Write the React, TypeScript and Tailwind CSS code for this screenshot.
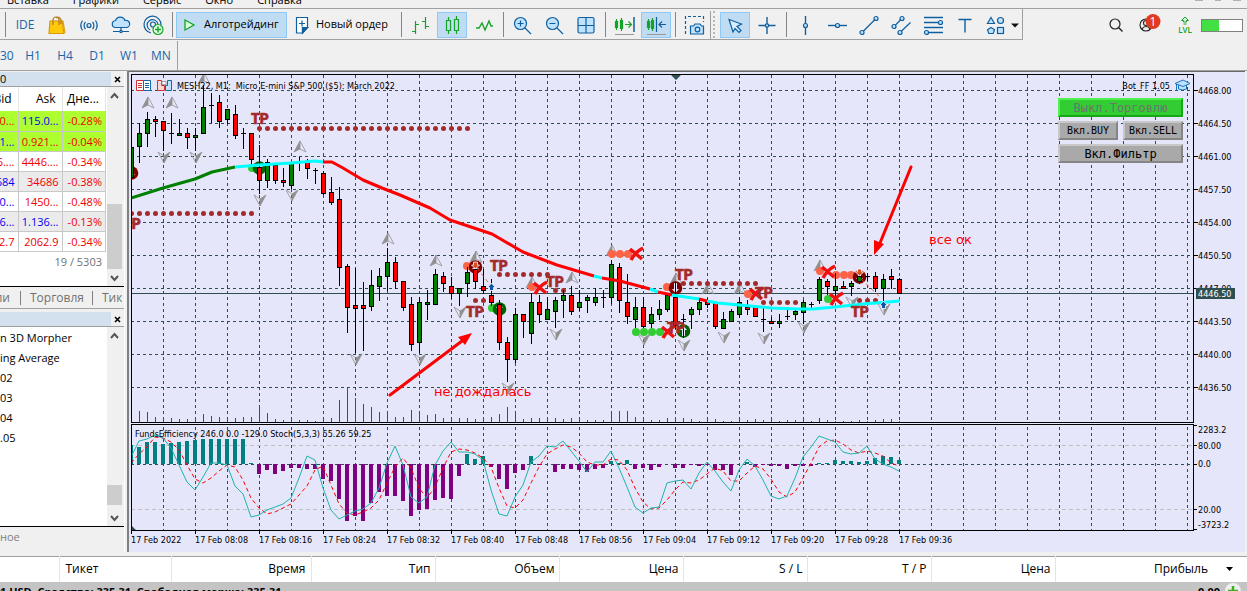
import React from "react";

const BLUE = "#0f5f9f";
const SKY = "#bfe3ff";
const GREEN = "#14a32a";

const FONT = "font-['Open_Sans','Noto_Sans',sans-serif]";

/* ---------- toolbar ---------- */

const Icon = ({ children }: { children: React.ReactNode }) => (
  <svg width="24" height="24" viewBox="0 0 24 24" fill="none" stroke={BLUE} strokeWidth="1.2">
    {children}
  </svg>
);

type ToolProps = { label: string; active?: boolean; children: React.ReactNode };

const Tool = ({ label, active, children }: ToolProps) => (
  <div className="flex h-[26px] w-8 justify-center">
    <button
      type="button"
      aria-label={label}
      className={
        active
          ? "flex w-[30px] items-center justify-center border border-[#90c8f6] bg-[#c0dcf3]"
          : "flex w-[30px] items-center justify-center"
      }
    >
      {children}
    </button>
  </div>
);

const Sep = () => (
  <div className="flex h-[25px] w-1.5 justify-center">
    <div className="w-px bg-[#858585]" />
  </div>
);

const Toolbar = () => (
  <div className="flex h-[31px] items-center justify-between border-t border-[#a0a0a0]">
    <div className="flex h-[31px] items-center border-r border-b border-[#a0a0a0] pt-0.5 pl-0.5">
      <Sep />
      <button type="button" className="ml-px h-[26px] w-8 text-xs text-[#1a66a5]">IDE</button>
      <Tool label="Маркет">
        <Icon>
          <path d="M5 8h12l2 12.500H4z" fill="#ffc90e" stroke="#d8980b" />
          <path d="M8 12V7a3 3 0 0 1 6 0v5M11 5a3 3 0 0 1 5 2v4" stroke="#b5781c" />
          <path d="M17 8h1l2 12" stroke="#e0a010" />
        </Icon>
      </Tool>
      <Tool label="Сигналы">
        <Icon>
          <circle cx="12" cy="12.500" r="2" fill={SKY} />
          <path d="M8.500 9a5 5 0 0 0 0 7M15.500 9a5 5 0 0 1 0 7M5.500 7.500a9 9 0 0 0 0 10M18.500 7.500a9 9 0 0 1 0 10" />
        </Icon>
      </Tool>
      <Tool label="VPS">
        <Icon>
          <path d="M7 14.500a3.500 3.500 0 0 1-.5-7A5 5 0 0 1 16 7.500a3.500 3.500 0 0 1 2 7z" fill={SKY} />
          <path d="M4 18.500h16M12 14.500v4" />
          <circle cx="12" cy="18.500" r="1.200" fill={SKY} />
        </Icon>
      </Tool>
      <Tool label="Сообщество">
        <Icon>
          <path d="M10 20a8.500 8.500 0 1 1 10-8M9 17a5.500 5.500 0 1 1 8-6" />
          <circle cx="12" cy="11.500" r="2.500" />
          <circle cx="17" cy="16.500" r="5" fill="#e4ffe4" stroke={GREEN} />
          <path d="M14 16.500h6M17 13.500v6" stroke={GREEN} strokeWidth="1.5" />
        </Icon>
      </Tool>
      <Sep />
      <button
        type="button"
        className="ml-px flex h-[26px] w-[111px] items-center gap-1.5 border border-[#90c8f6] bg-[#c0dcf3] pl-0.5 text-[11px] whitespace-nowrap"
      >
        <svg width="19" height="24" viewBox="0 0 19 24" fill="#d9ffd9" stroke={GREEN} strokeWidth="1.3">
          <path d="M6 7l9 5-9 5z" />
        </svg>
        Алготрейдинг
      </button>
      <button type="button" className="flex h-[26px] w-[111px] items-center gap-0.5 pl-[3px] text-[11px] whitespace-nowrap">
        <Icon>
          <path d="M6.500 4.500h11v10l-5 5.500h-6zM17.500 14.500l-5 5.500v-5.500z" fill="#fff" />
          <path d="M12.500 20l5-5.500h-5z" fill={BLUE} />
          <path d="M9 10.500h6M12 7.500v6" />
        </Icon>
        Новый ордер
      </button>
      <Sep />
      <Tool label="Бары">
        <Icon>
          <path d="M7.500 8v13M4 18.500h3.500M7.500 11.500H11M17.500 4v12M14 8.500h3.500M17.500 13.500H21" stroke={GREEN} />
        </Icon>
      </Tool>
      <Tool label="Свечи" active>
        <Icon>
          <path d="M8.500 4v3M8.500 18v3M16.500 3v3M16.500 18v3M6.500 7.500h4v10h-4zM14.500 6.500h4v11h-4z" stroke={GREEN} />
        </Icon>
      </Tool>
      <Tool label="Линия">
        <Icon>
          <path d="M4 15h3l3-5 3 7 4-9 2 5h2" stroke={GREEN} strokeWidth="1.4" />
        </Icon>
      </Tool>
      <Sep />
      <Tool label="Увеличить">
        <Icon>
          <circle cx="10.500" cy="10.500" r="6" fill={SKY} />
          <path d="M15 15l6 6M7.500 10.500h6M10.500 7.500v6" />
        </Icon>
      </Tool>
      <Tool label="Уменьшить">
        <Icon>
          <circle cx="10.500" cy="10.500" r="6" fill={SKY} />
          <path d="M15 15l6 6M7.500 10.500h6" />
        </Icon>
      </Tool>
      <Tool label="Упорядочить окна">
        <Icon>
          <rect x="4" y="4.500" width="16" height="15.500" rx="1.500" fill={SKY} />
          <path d="M12 4v16M4 12.500h16" />
        </Icon>
      </Tool>
      <Sep />
      <Tool label="Автопрокрутка">
        <Icon>
          <path d="M4.500 6v11M9.500 5v13M3.500 8.500h2v6h-2zM8.500 7.500h2v8h-2zM13 11.500h6M16.500 8.500l3 3-3 3" stroke={GREEN} />
          <path d="M22 4v15" strokeWidth="1.500" />
          <path d="M3 21.500h19" stroke="#999" strokeWidth="1" />
        </Icon>
      </Tool>
      <Tool label="Сдвиг графика" active>
        <Icon>
          <path d="M4.500 6v11M8.500 5v13M3.500 8.500h2v6h-2zM7.500 7.500h2v8h-2z" stroke={GREEN} />
          <path d="M12.500 4v15M15 11.500h7M18 8.500l-3 3 3 3" />
          <path d="M3 21.500h19" stroke="#999" strokeWidth="1" />
        </Icon>
      </Tool>
      <Sep />
      <Tool label="Снимок экрана">
        <Icon>
          <path d="M3.500 21V3.500h18V9" strokeDasharray="3 2" />
          <path d="M8.500 13h3l1.500-2h5l1.500 2h2v8h-13z" fill={SKY} />
          <circle cx="15.500" cy="16.500" r="2.300" />
        </Icon>
      </Tool>
      <div className="h-full w-px bg-[#a0a0a0]" />
      <div className="mx-0.5 h-[27px] w-1 border-l-2 border-dotted border-[#b8b8b8]" />
      <Tool label="Курсор" active>
        <Icon>
          <path d="M6 6.500l12.500 4.500-4.500 2.500 4 4-2 2-4-4-2 3.500z" fill="#d6ecff" />
        </Icon>
      </Tool>
      <Tool label="Перекрестие">
        <Icon>
          <path d="M12 4v17M3.500 12.500h17" strokeWidth="1.400" />
          <circle cx="12" cy="12.500" r="1.700" fill={SKY} />
        </Icon>
      </Tool>
      <Sep />
      <Tool label="Вертикальная линия">
        <Icon>
          <path d="M12.500 3v19" strokeWidth="1.400" />
          <circle cx="12.500" cy="12.500" r="2" fill={SKY} />
        </Icon>
      </Tool>
      <Tool label="Горизонтальная линия">
        <Icon>
          <path d="M3 12.500h19" strokeWidth="1.400" />
          <circle cx="12.500" cy="12.500" r="2" fill={SKY} />
        </Icon>
      </Tool>
      <Tool label="Трендовая линия">
        <Icon>
          <path d="M5 19.500l14-14" />
          <circle cx="5" cy="19.500" r="2" fill={SKY} />
          <circle cx="19" cy="5.500" r="2" fill={SKY} />
        </Icon>
      </Tool>
      <Tool label="Канал">
        <Icon>
          <path d="M5 13.500l8-8M11 19.500l10.500-10" />
          <circle cx="5" cy="13.500" r="2" fill={SKY} />
          <circle cx="13" cy="5.500" r="2" fill={SKY} />
          <circle cx="11" cy="19.500" r="2" fill={SKY} />
        </Icon>
      </Tool>
      <Tool label="Фибоначчи">
        <Icon>
          <path d="M3 4.500h19M3 9.500h17M3 14.500h19M5 19.500h17" strokeWidth="1.400" />
          <circle cx="19.500" cy="9.500" r="2" fill={SKY} />
          <circle cx="5.500" cy="19.500" r="2" fill={SKY} />
        </Icon>
      </Tool>
      <Tool label="Текст">
        <Icon>
          <path d="M5.500 6.500h13M12 6.500v13" strokeWidth="1.400" />
        </Icon>
      </Tool>
      <button type="button" aria-label="Объекты" className="flex h-[26px] w-[41px] items-center">
        <svg width="40" height="24" viewBox="0 0 40 24" fill={SKY} stroke={BLUE} strokeWidth="1.2">
          <path d="M10 4.500l3.500 6h-7zM10 14.500l3.500 2.300-1.300 3.700H7.800l-1.300-3.700z" />
          <circle cx="19.500" cy="7.500" r="3" />
          <rect x="16.500" y="14.500" width="6" height="6" />
          <path d="M30 10.500h8l-4 4z" fill="#111" stroke="none" />
        </svg>
      </button>
    </div>
    <div className="flex items-center pt-0.5 pr-1">
      <button type="button" aria-label="Поиск" className="w-6">
        <svg width="24" height="24" viewBox="0 0 24 24" fill="none" stroke="#222" strokeWidth="1.2">
          <circle cx="11" cy="11" r="5" />
          <path d="M14.500 14.500l4 4" strokeWidth="1.500" />
        </svg>
      </button>
      <button type="button" aria-label="Уведомления" className="ml-2 w-8">
        <svg width="32" height="26" viewBox="0 0 32 26" fill="none" stroke="#222" strokeWidth="1.1">
          <circle cx="10" cy="13" r="6" />
          <circle cx="10" cy="11" r="2.500" />
          <path d="M6 17a4.500 4.500 0 0 1 8 0" />
          <circle cx="17" cy="9.500" r="7.500" fill="#e03a20" stroke="none" />
          <text x="17" y="14" textAnchor="middle" fontSize="12" fill="#fff" stroke="none">1</text>
        </svg>
      </button>
      <button type="button" className="ml-[3px] flex w-7 flex-col items-center text-[8px] leading-[8px] font-semibold text-[#14a32a]">
        <svg width="10" height="10" viewBox="0 0 10 10" fill="#d9ffd9" stroke={GREEN}>
          <path d="M5 1l3.500 3.500h-2v1.500h-3V4.500h-2zM3.500 8h3" />
        </svg>
        LVL
      </button>
      <div className="ml-0.5 flex h-[13px] w-[42px] border border-[#808080] bg-white">
        <div className="w-[17px] bg-[#42e042]" />
      </div>
    </div>
  </div>
);

const Menu = () => (
  <div className="flex h-2 items-end justify-between overflow-hidden text-[11px] leading-4">
    <div className="flex gap-6 pl-[7px]">
      <button type="button">Вставка</button>
      <button type="button">Графики</button>
      <button type="button">Сервис</button>
      <button type="button">Окно</button>
      <button type="button">Справка</button>
    </div>
    <div className="flex gap-3 self-start pr-1.5">
      <div className="h-px w-2 bg-[#b0b0b0]" />
      <div className="h-px w-1.5 bg-[#b0b0b0]" />
      <div className="h-px w-2 bg-[#b0b0b0]" />
    </div>
  </div>
);

const periods = ["H1", "H4", "D1", "W1", "MN"];

const Periods = () => (
  <div className="flex h-8 border-b border-[#a0a0a0] pt-0.5">
    <div className="flex items-center border-r border-[#a0a0a0] pt-px text-xs text-[#1a66a5]">
      <button type="button" className="w-[17px] text-left">30</button>
      {periods.map((p) => (
        <button key={p} type="button" className="w-8">{p}</button>
      ))}
    </div>
  </div>
);

/* ---------- left panels ---------- */

type Quote = { bid: string; ask: string; day: string; bidColor: string; askColor: string; row: string };

const R = "text-[#f00000]";
const B = "text-[#0000f0]";

const quotes: Quote[] = [
  { bid: "115.0...", ask: "115.0...", day: "-0.28%", bidColor: R, askColor: B, row: "bg-[#adff2f]" },
  { bid: "0.921...", ask: "0.921...", day: "-0.04%", bidColor: B, askColor: R, row: "bg-[#adff2f]" },
  { bid: "4446....", ask: "4446....", day: "-0.34%", bidColor: R, askColor: R, row: "bg-white" },
  { bid: "34684", ask: "34686", day: "-0.38%", bidColor: B, askColor: R, row: "bg-[#ebebeb]" },
  { bid: "1450...", ask: "1450...", day: "-0.48%", bidColor: B, askColor: R, row: "bg-white" },
  { bid: "1.136...", ask: "1.136...", day: "-0.13%", bidColor: B, askColor: B, row: "bg-[#ebebeb]" },
  { bid: "2062.7", ask: "2062.9", day: "-0.34%", bidColor: R, askColor: R, row: "bg-white" },
];

const PanelTitle = ({ text }: { text: string }) => (
  <div className="flex h-[15px] shrink-0 items-center border-b border-[#a0a0a0] text-[11px]">
    <div className="h-full flex-1 overflow-hidden bg-[#d3e1ef] leading-[14px]">{text}</div>
    <button type="button" aria-label="Закрыть" className="flex w-[13px] justify-center">
      <svg width="7" height="7" viewBox="0 0 7 7" stroke="#000" strokeWidth="1.6">
        <path d="M1 1l5 5M6 1L1 6" />
      </svg>
    </button>
  </div>
);

const Chevron = ({ up }: { up?: boolean }) => (
  <svg width="15" height="17" viewBox="0 0 15 17" fill="none" stroke="#555" strokeWidth="2">
    <path d={up ? "M4 11l3.500-4 3.500 4" : "M4 7l3.500 4 3.500-4"} />
  </svg>
);

const MarketWatch = () => (
  <section className="flex h-[238px] shrink-0 flex-col border-b border-[#a0a0a0] pt-px">
    <PanelTitle text="0" />
    <div className="flex flex-1 border-b border-black bg-white">
      <div className="w-[107px] pr-px">
        <table className="w-full table-fixed border-collapse text-[11px]">
          <thead>
            <tr className="h-[24px] text-xs">
              <th className="w-[18px] border-r border-[#e5e5e5] p-0 font-normal">
                <div className="flex justify-end overflow-hidden pr-1.5">Bid</div>
              </th>
              <th className="w-[44px] border-r border-[#e5e5e5] p-0 pr-1.5 text-right font-normal">Ask</th>
              <th className="border-r border-[#e5e5e5] p-0 pr-1.5 text-right font-normal">Дне...</th>
            </tr>
          </thead>
          <tbody>
            {quotes.map((q, i) => (
              <tr key={i} className={q.row + " h-5 border-b border-[#c8c8c8] leading-[19px]"}>
                <td className="border-r border-[#c8c8c8] p-0">
                  <div className={q.bidColor + " flex justify-end overflow-hidden pr-[3px]"}>{q.bid}</div>
                </td>
                <td className="border-r border-[#c8c8c8] p-0">
                  <div className={q.askColor + " flex justify-end overflow-hidden pr-[3px]"}>{q.ask}</div>
                </td>
                <td className="border-r border-[#c8c8c8] p-0">
                  <div className={R + " flex justify-end pr-[3px]"}>{q.day}</div>
                </td>
              </tr>
            ))}
          </tbody>
        </table>
        <div className="pr-1 text-right text-[11px] leading-[19px] text-[#707070]">19 / 5303</div>
      </div>
      <div className="flex flex-1 flex-col bg-[#f0f0f0]">
        <Chevron up />
        <div className="flex-1" />
        <div className="h-[65px] w-[15px] bg-[#cdcdcd]" />
        <Chevron />
      </div>
    </div>
    <div className="flex h-[21px] items-center overflow-hidden text-xs whitespace-nowrap text-[#707070]">
      <button type="button" className="flex w-[10px] justify-end">Детали</button>
      <div className="ml-[10px] h-3.5 w-px bg-[#808080]" />
      <button type="button" className="ml-[9px]">Торговля</button>
      <div className="ml-[8px] h-3.5 w-px bg-[#808080]" />
      <button type="button" className="ml-[9px] w-5 overflow-hidden text-left">Тик</button>
    </div>
  </section>
);

const items = ["n 3D Morpher", "ing Average", "02", "03", "04", ".05"];

const Navigator = () => (
  <section className="mt-[3px] flex min-h-0 flex-1 flex-col">
    <PanelTitle text="" />
    <div className="flex flex-1 border-b border-black bg-white">
      <ul className="w-[107px] pt-px text-[11px] leading-5 whitespace-nowrap">
        {items.map((t) => (
          <li key={t}>{t}</li>
        ))}
      </ul>
      <div className="flex flex-1 flex-col bg-[#f0f0f0]">
        <Chevron up />
        <div className="flex-1" />
        <div className="mb-1 h-[20px] w-[15px] bg-[#cdcdcd]" />
        <Chevron />
      </div>
    </div>
    <div className="h-[25px] text-[11px] leading-5 text-[#808080]">ное</div>
  </section>
);

/* ---------- chart ---------- */

// high, low, body top, body bottom; kind: g = up, r = down, d = doji
type Candle = [number, number, number, number, "g" | "r" | "d"];

const candles: Candle[] = [
  [147, 177, 147, 177, "g"], [123, 162, 133, 146, "g"], [112, 146, 119, 133, "g"], [116, 136, 119, 121, "r"],
  [121, 150, 121, 130, "r"], [113, 143, 133, 133, "d"], [119, 135, 133, 135, "g"], [128, 148, 133, 137, "r"],
  [128, 150, 135, 137, "g"], [85, 133, 107, 133, "g"], [93, 122, 105, 105, "d"], [95, 127, 102, 121, "r"],
  [109, 123, 109, 119, "g"], [105, 138, 114, 135, "r"], [128, 148, 133, 133, "d"], [133, 164, 133, 159, "r"],
  [145, 193, 167, 180, "r"], [159, 187, 162, 180, "g"], [165, 183, 165, 180, "r"], [168, 186, 180, 182, "r"],
  [163, 188, 163, 185, "g"], [157, 170, 162, 162, "d"], [159, 178, 162, 168, "r"], [168, 183, 170, 170, "d"],
  [171, 194, 173, 193, "r"], [177, 204, 192, 202, "r"], [187, 285, 199, 267, "r"], [264, 332, 266, 307, "r"],
  [268, 352, 305, 308, "r"], [282, 350, 305, 308, "r"], [270, 310, 285, 306, "g"], [268, 300, 276, 286, "g"],
  [248, 290, 262, 276, "g"], [257, 288, 262, 281, "r"], [281, 310, 281, 307, "r"], [297, 350, 304, 344, "r"],
  [297, 352, 302, 342, "g"], [290, 319, 302, 304, "g"], [269, 304, 274, 304, "g"], [272, 291, 276, 283, "r"],
  [277, 298, 286, 293, "r"], [288, 305, 288, 293, "g"], [267, 296, 272, 283, "g"], [269, 288, 269, 281, "r"],
  [269, 293, 286, 290, "r"], [279, 305, 295, 302, "r"], [300, 349, 304, 342, "r"], [337, 381, 342, 359, "r"],
  [308, 362, 314, 359, "g"], [314, 337, 314, 321, "r"], [293, 343, 302, 333, "g"], [295, 322, 302, 314, "r"],
  [297, 319, 309, 319, "g"], [297, 327, 300, 311, "g"], [290, 317, 295, 300, "g"], [286, 314, 295, 311, "r"],
  [290, 310, 302, 307, "g"], [295, 312, 297, 300, "g"], [288, 305, 297, 302, "g"], [290, 307, 297, 297, "d"],
  [260, 303, 264, 297, "g"], [263, 312, 267, 300, "r"], [274, 323, 302, 316, "r"], [297, 327, 307, 319, "g"],
  [297, 327, 307, 326, "r"], [307, 327, 314, 323, "g"], [300, 319, 309, 314, "g"], [295, 311, 295, 309, "g"],
  [282, 328, 297, 325, "r"], [314, 337, 319, 319, "d"], [307, 328, 309, 314, "g"], [300, 314, 302, 309, "g"],
  [298, 307, 302, 304, "r"], [302, 328, 303, 326, "r"], [312, 328, 319, 328, "g"], [309, 321, 311, 321, "g"],
  [297, 317, 302, 314, "g"], [300, 314, 307, 309, "r"], [305, 316, 307, 316, "r"], [308, 331, 319, 319, "d"],
  [317, 323, 321, 323, "r"], [314, 327, 321, 323, "g"], [307, 319, 316, 316, "d"], [309, 319, 311, 314, "g"],
  [300, 323, 302, 312, "g"], [302, 307, 304, 304, "d"], [277, 303, 279, 300, "g"], [279, 294, 281, 286, "r"],
  [273, 297, 286, 290, "g"], [281, 288, 286, 288, "r"], [281, 295, 283, 286, "g"], [273, 283, 276, 281, "g"],
  [273, 280, 276, 276, "d"], [272, 291, 276, 288, "r"], [274, 302, 279, 288, "g"], [269, 288, 276, 279, "r"],
  [278, 293, 279, 293, "r"],
];

const volumes = [
  6, 11, 10, 5, 5, 4, 3, 3, 5, 8, 6, 5, 3, 4, 5, 5, 16, 9, 3, 2, 3, 2, 2, 1, 2, 4, 22, 34, 24, 18, 15, 10, 11, 5, 5,
  12, 8, 7, 8, 4, 3, 4, 4, 3, 5, 5, 8, 15, 10, 3, 4, 4, 5, 4, 3, 4, 3, 2, 2, 2, 8, 11, 11, 5, 4, 2, 2, 4, 5, 4, 3,
  1, 2, 3, 1, 1, 2, 2, 3, 2, 2, 1, 2, 2, 2, 1, 4, 2, 1, 1, 1, 2, 1, 2, 3, 3, 1,
];

const funds = [
  19, 17, 22, 22, 20, 21, 22, 23, 24, 25, 25, 25, 25, 25, 25, 1, -10, -6, -10, -7, -4, -4, -5, -5, -15, -17, -35,
  -57, -52, -57, -39, -28, -32, -32, -37, -52, -46, -45, -36, -34, -35, -12, 10, 5, 8, -3, -15, -25, -9, -6, 8, -1,
  0, -8, -5, -5, -6, -8, -5, -4, 3, 1, 4, -5, -4, -6, -3, 0, -4, -4, -1, -2, -1, -6, -6, -11, 0, 2, -3, -1, -2, -2,
  -5, -2, -2, -2, 1, 1, 4, 3, 3, 2, 3, 6, 8, 7, 4,
];

const stoch = [
  457, 441, 439, 435, 438, 448, 465, 482, 490, 477, 463, 463, 465, 486, 494, 517, 515, 510, 507, 504, 498, 478, 456,
  460, 488, 510, 519, 515, 511, 509, 503, 488, 463, 446, 465, 497, 503, 497, 465, 451, 442, 452, 452, 454, 460, 490,
  514, 516, 497, 485, 462, 456, 446, 447, 441, 451, 461, 472, 462, 462, 451, 468, 487, 507, 513, 508, 507, 483, 481,
  480, 489, 473, 462, 471, 482, 491, 470, 459, 466, 480, 496, 499, 496, 478, 457, 447, 436, 439, 442, 452, 454, 453,
  446, 459, 464, 467, 471,
];

const signal = [
  463, 454, 447, 437, 438, 442, 450, 465, 479, 483, 478, 471, 465, 467, 480, 498, 508, 514, 512, 508, 504, 495, 486,
  470, 466, 485, 504, 513, 515, 512, 508, 500, 483, 467, 458, 468, 488, 498, 487, 468, 452, 449, 450, 453, 458, 467,
  488, 506, 508, 500, 483, 467, 454, 449, 445, 447, 453, 462, 465, 465, 459, 460, 470, 488, 502, 509, 508, 500, 490,
  482, 483, 480, 474, 468, 471, 481, 481, 473, 466, 469, 479, 492, 497, 492, 478, 463, 447, 441, 440, 444, 450, 453,
  451, 453, 456, 463, 466,
];

const barX = (i: number) => 131 + i * 8;
const toPoints = (ys: number[]) => ys.map((y, i) => `${barX(i)},${y}`).join(" ");

const maParts = [
  { color: "#008000", d: "M131 198L163 188L195 179L212 172L235 167" },
  { color: "#ff0000", d: "M323 162L332 162L343 168L363 180L382 188L400 195L430 208L450 220L492 234L523 252L557 265L594 276" },
  { color: "#00ffff", d: "M235 167L259 165L291 163L315 161L323 162M594 276L602 278" },
  { color: "#ff0000", d: "M602 278L620 281L650 289M658 292L672 295" },
  { color: "#00ffff", d: "M650 289L658 292M672 295L699 299M707 301L718 303L750 306L772 308L797 309L813 309L835 307L863 304L900 301" },
  { color: "#ff0000", d: "M699 299L707 301" },
];

const dotRows = [
  { y: 128, from: 259, to: 467 },
  { y: 213, from: 131, to: 251 },
  { y: 274, from: 499, to: 547 },
  { y: 290, from: 555, to: 563 },
  { y: 300, from: 475, to: 483 },
  { y: 283, from: 683, to: 755 },
  { y: 302, from: 763, to: 795 },
  { y: 300, from: 859, to: 875 },
];

const dots = dotRows.flatMap(({ y, from, to }) =>
  Array.from({ length: (to - from) / 8 + 1 }, (_, i) => [from + i * 8, y])
);

const upMarks = [
  [148, 103], [172, 103], [204, 79], [300, 147], [388, 239], [436, 261], [476, 257], [532, 283], [572, 278],
  [612, 251], [676, 279], [708, 289], [740, 289], [820, 266],
];
const downMarks = [
  [164, 157], [196, 157], [260, 200], [292, 195], [356, 359], [420, 359], [460, 312], [508, 388], [556, 334],
  [644, 339], [684, 345], [724, 337], [764, 338], [804, 327], [852, 302], [884, 309],
];
const orange = [
  [467, 266], [612, 254], [620, 254], [628, 254], [532, 287], [667, 287], [748, 294], [820, 271], [836, 275],
  [844, 275], [851, 275],
];
const lime = [[252, 168], [492, 308], [636, 332], [644, 332], [652, 332], [660, 332], [828, 299]];
const crosses = [[636, 254], [540, 288], [668, 332], [756, 294], [828, 272], [836, 299]];
const sells = [[131, 173], [475, 267], [675, 288], [859, 277]];
const buys = [[259, 168], [499, 309], [683, 331]];
const tps = [[252, 124], [124, 229], [491, 271], [547, 287], [467, 317], [676, 280], [668, 333], [756, 298], [852, 317]];

const prices = ["4468.00", "4464.50", "4461.00", "4457.50", "4454.00", "4450.50", "4447.00", "4443.50", "4440.00", "4436.50"];
const times = [
  "17 Feb 2022", "17 Feb 08:08", "17 Feb 08:16", "17 Feb 08:24", "17 Feb 08:32", "17 Feb 08:40", "17 Feb 08:48",
  "17 Feb 08:56", "17 Feb 09:04", "17 Feb 09:12", "17 Feb 09:20", "17 Feb 09:28", "17 Feb 09:36",
];
const levels = [
  { y: 429, tick: 425, text: "2283.2" },
  { y: 445, tick: 445, text: "80.00" },
  { y: 463, tick: 464, text: "0.0" },
  { y: 509, tick: 509, text: "20.00" },
  { y: 524, tick: 529, text: "-3723.2" },
];
const gridX = Array.from({ length: 33 }, (_, i) => 163 + i * 32);

const Grid = () => (
  <g stroke="#2f4f4f" strokeDasharray="3 3" shapeRendering="crispEdges">
    {gridX.map((x) => (
      <path key={x} d={`M${x + 0.5} 75V422M${x + 0.5} 427V530`} />
    ))}
    {prices.map((p, i) => (
      <path key={p} d={`M131 ${90.5 + i * 33}H1193`} />
    ))}
    <path d="M131 464.500H1193" />
    <path d="M131 445.500H1193M131 509.500H1193" stroke="#c0c0c0" strokeDasharray="4 3" />
  </g>
);

const Candles = () => (
  <g shapeRendering="crispEdges">
    {candles.map(([high, low, top, bottom, kind], i) => {
      const x = barX(i);
      return (
        <g key={i}>
          <rect x={x} y={high} width="1" height={low - high + 1} />
          <rect x={x - 2} y={top} width="5" height={bottom - top + 1} />
          {kind !== "d" && (
            <rect
              x={x - 1}
              y={top + 1}
              width="3"
              height={Math.max(bottom - top - 1, 1)}
              fill={kind === "g" ? "#008000" : "#ff0000"}
            />
          )}
        </g>
      );
    })}
  </g>
);

const Marks = () => (
  <>
    {upMarks.map(([x, y]) => (
      <g key={`${x}-${y}`} stroke="#909090" strokeWidth="0.8">
        <path d={`M${x} ${y - 6}L${x - 6} ${y + 5}L${x} ${y + 2}z`} fill="#909090" />
        <path d={`M${x} ${y - 6}L${x + 6} ${y + 5}L${x} ${y + 2}`} fill="none" />
      </g>
    ))}
    {downMarks.map(([x, y]) => (
      <g key={`${x}-${y}`} stroke="#909090" strokeWidth="0.8">
        <path d={`M${x} ${y + 6}L${x + 6} ${y - 5}L${x} ${y - 1}z`} fill="#909090" />
        <path d={`M${x} ${y + 6}L${x - 6} ${y - 5}L${x} ${y - 1}`} fill="none" />
      </g>
    ))}
    {dots.map(([x, y]) => (
      <circle key={`${x}-${y}`} cx={x + 0.5} cy={y + 0.5} r="2.500" fill="#a52a2a" />
    ))}
    {orange.map(([x, y]) => (
      <circle key={`${x}-${y}`} cx={x} cy={y} r="4" fill="#ff6347" />
    ))}
    {lime.map(([x, y]) => (
      <circle key={`${x}-${y}`} cx={x} cy={y} r="4" fill="#32cd32" />
    ))}
    {sells.map(([x, y]) => (
      <g key={x}>
        <circle cx={x + 0.5} cy={y} r="6.800" fill="#800000" />
        <path d={`M${x - 1} ${y - 5}h3v6h2l-3.500 4-3.500-4h2z`} fill="#e6e6fa" />
      </g>
    ))}
    {buys.map(([x, y]) => (
      <g key={x}>
        <circle cx={x + 0.5} cy={y} r="6.800" fill="#006400" />
        <path d={`M${x - 1} ${y + 5}h3v-6h2l-3.500-4-3.500 4h2z`} fill="#e6e6fa" />
      </g>
    ))}
  </>
);

const Deals = () => (
  <>
    <path d="M477 268L491 286M861 279L881 298" stroke="#e0481e" strokeDasharray="4 3" strokeWidth="0.8" />
    <path d="M475.500 269l-4-4h2v-3h4v3h2zM859.500 276l-4-4h2v-3h4v3h2z" fill="#e0481e" stroke="#fff" strokeWidth="0.8" />
    <path d="M491.500 283l4 4.500h-2v3h-4v-3h-2zM883.500 301l4 4.500h-2v3h-4v-3h-2z" fill="#0f55a5" stroke="#fff" strokeWidth="0.8" />
    {crosses.map(([x, y]) => (
      <path
        key={`${x}-${y}`}
        d={`M${x - 6} ${y - 5}Q${x} ${y} ${x + 6} ${y + 5}M${x + 7} ${y - 6}Q${x - 1} ${y - 2} ${x - 5} ${y + 6}`}
        fill="none"
        stroke="#f01010"
        strokeWidth="3.500"
      />
    ))}
    <g fill="#a52a2a" stroke="#a52a2a" strokeWidth="0.500" className="font-['Roboto',sans-serif] text-[14px] font-black">
      {tps.map(([x, y]) => (
        <text key={`${x}-${y}`} x={x - 1} y={y}>TP</text>
      ))}
    </g>
  </>
);

const Indicator = () => (
  <>
    <g shapeRendering="crispEdges">
      {funds.map((v, i) => (
        <rect
          key={i}
          x={barX(i) - 2}
          y={v > 0 ? 464 - v : 464}
          width="4"
          height={Math.abs(v)}
          fill={v > 0 ? "#008080" : "#800080"}
        />
      ))}
    </g>
    <polyline points={toPoints(signal)} fill="none" stroke="#ff0000" strokeDasharray="4 3" />
    <polyline points={toPoints(stoch)} fill="none" stroke="#20b2aa" />
  </>
);

const Chart = () => (
  <div className="relative min-w-0 flex-1 bg-[#e6e6fa]">
    <svg
      viewBox="129 72 1116 480"
      className="block h-full w-full font-['DejaVu_Sans_Condensed','DejaVu_Sans',sans-serif] text-[9px]"
    >
      <defs>
        <clipPath id="plot">
          <rect x="131" y="75" width="1062" height="455" />
        </clipPath>
      </defs>
      <Grid />
      <g clipPath="url(#plot)">
        <g fill="#008000" shapeRendering="crispEdges">
          {volumes.map((v, i) => (
            <rect key={i} x={barX(i)} y={422 - v} width="1" height={v} />
          ))}
        </g>
        <path d="M131 293.500H1193" stroke="#2f4f4f" shapeRendering="crispEdges" />
        <Marks />
        <Candles />
        {maParts.map(({ color, d }) => (
          <path key={d} d={d} fill="none" stroke={color} strokeWidth="3" strokeLinejoin="round" />
        ))}
        <Deals />
        <Indicator />
        <path d="M671 75h10l-5 5zM131 525l5 5h-5z" fill="#2f4f4f" />
      </g>

      <path
        d="M131.500 530V424.500H1193.500V530.500H131.500M131.500 422.500V74.500H1193.500V422.500H131.500"
        fill="none"
        stroke="#000"
        shapeRendering="crispEdges"
      />

      {/* scales */}
      {prices.map((p, i) => (
        <g key={p}>
          <path d={`M1193 ${90.5 + i * 33}h5`} stroke="#000" shapeRendering="crispEdges" />
          <text x="1198" y={94 + i * 33}>{p}</text>
        </g>
      ))}
      <rect x="1196" y="288" width="39" height="11" fill="#2f4f4f" />
      <text x="1198" y="297" fill="#fff">4446.50</text>
      {levels.map((l) => (
        <g key={l.text}>
          <path d={`M1193 ${l.tick + 0.5}h4`} stroke="#000" shapeRendering="crispEdges" />
          <text x="1198" y={l.y + 4}>{l.text}</text>
        </g>
      ))}
      {times.map((t, i) => (
        <g key={t}>
          <path d={`M${131.5 + i * 64} 530v4`} stroke="#000" shapeRendering="crispEdges" />
          <text x={131 + i * 64} y="543">{t}</text>
        </g>
      ))}

      {/* captions */}
      <g fill="#fff" strokeWidth="1">
        <path d="M136.500 80.500h7v10h-7zM138 83.500h4M138 85.500h4M138 87.500h4" stroke="#d03030" />
        <path d="M143.500 80.500h7v10h-7zM145 83.500h4M145 85.500h4M145 87.500h4" stroke="#1a66a5" />
        <path d="M157.500 80.500h4v5h3v5h-7z" fill="#ffd6d6" stroke="#d03030" />
        <path d="M171.500 80.500h-4v5h-2v5h6z" fill={SKY} stroke="#1a66a5" />
        <path d="M162 81.500h4v3h-4z" stroke="#a0a0a0" />
      </g>
      <text x="177" y="89" xmlSpace="preserve">MESH22, M1:  Micro E-mini S&amp;P 500 ($5): March 2022</text>
      <text x="1170" y="89" textAnchor="end">Bot_FF 1.05</text>
      <g fill={SKY} stroke="#1b75bb">
        <path d="M1178.500 85v4q4 2 8 0v-4" />
        <path d="M1175 83.500l8-3.500 7 3.500-7 3z" />
        <path d="M1176.500 84v7" />
      </g>
      <text x="135" y="437">FundsEfficiency 246.0 0.0 -129.0 Stoch(5,3,3) 55.26 59.25</text>

      {/* notes */}
      <g fill="#ff0000" stroke="#ff0000" strokeLinecap="round">
        <path d="M390 395L462 341M911 167L880 243" strokeWidth="3" fill="none" />
        <path d="M472 333l-7 12-7-8zM874 255l0-15 10 4z" stroke="none" />
      </g>
      <g fill="#ff0000" className="font-['DejaVu_Sans',sans-serif] text-[13px]">
        <text x="434" y="396">не дождалась</text>
        <text x="929" y="244">все ок</text>
      </g>
    </svg>

    <div className="absolute top-[26px] right-[62px] grid w-[125px] grid-cols-2 gap-x-[5px] gap-y-1 font-['DejaVu_Sans_Mono',monospace] text-xs">
      <button
        type="button"
        className="col-span-2 h-[19px] border-2 border-t-[#4ff04f] border-r-[#15a815] border-b-[#15a815] border-l-[#4ff04f] bg-[#32cd32] leading-[14px] text-[#6e746e]"
      >
        Выкл.Торговлю
      </button>
      <button
        type="button"
        className="h-[19px] border-2 border-t-[#c8c8c8] border-r-[#858585] border-b-[#858585] border-l-[#c8c8c8] bg-[#a9a9a9] text-[10px] leading-[14px]"
      >
        Вкл.BUY
      </button>
      <button
        type="button"
        className="h-[19px] border-2 border-t-[#c8c8c8] border-r-[#858585] border-b-[#858585] border-l-[#c8c8c8] bg-[#a9a9a9] text-[10px] leading-[14px]"
      >
        Вкл.SELL
      </button>
      <button
        type="button"
        className="col-span-2 h-[19px] border-2 border-t-[#c8c8c8] border-r-[#858585] border-b-[#858585] border-l-[#c8c8c8] bg-[#a9a9a9] leading-[14px]"
      >
        Вкл.Фильтр
      </button>
    </div>
  </div>
);

/* ---------- bottom ---------- */

const columns = ["Тип", "Объем", "Цена", "S / L", "T / P", "Цена"];

const Trades = () => (
  <div className="h-[39px] shrink-0 pt-1">
    <table className="w-full table-fixed border-collapse border-t border-[#a0a0a0] bg-white text-xs">
      <thead>
        <tr className="h-[25px]">
          <th className="w-[59px] border-r border-[#e5e5e5]" />
          <th className="w-[112px] border-r border-[#e5e5e5] pl-1.5 text-left font-normal">Тикет</th>
          <th className="w-[140px] border-r border-[#e5e5e5] pr-[5px] text-right font-normal">Время</th>
          {columns.map((c, i) => (
            <th key={i} className="w-[124px] border-r border-[#e5e5e5] pr-1 text-right font-normal">{c}</th>
          ))}
          <th className="pr-3.5 font-normal">
            <div className="flex items-center justify-end gap-[18px]">
              Прибыль
              <svg width="7" height="4" viewBox="0 0 7 4"><path d="M0 0h7L3.500 4z" /></svg>
            </div>
          </th>
        </tr>
      </thead>
    </table>
    <div className="flex h-6 justify-between bg-[#c4c4c4] pr-[5px] text-[11px] leading-[20px] font-bold">
      <div className="whitespace-pre">1 USD  Средства: 335.31  Свободная маржа: 335.31</div>
      <div className="flex gap-1">
        0.00
        <svg width="18" height="18" viewBox="0 0 18 18">
          <circle cx="9" cy="9" r="8" fill="#eee" />
          <path d="M9 4v10M4 9h10" stroke="#3cb01c" strokeWidth="2.500" />
        </svg>
      </div>
    </div>
  </div>
);

export default function App() {
  return (
    <div className={FONT + " flex h-screen flex-col overflow-hidden bg-[#f0f0f0] text-black"}>
      <Menu />
      <Toolbar />
      <Periods />
      <main className="flex min-h-0 flex-1 pr-0.5">
        <div className="flex w-[124px] shrink-0 flex-col">
          <MarketWatch />
          <Navigator />
        </div>
        <div className="w-[5px] shrink-0 border-r-2 border-l border-r-[#808080] border-l-white" />
        <div className="flex min-w-0 flex-1 border-t border-[#696969]">
          <Chart />
        </div>
      </main>
      <Trades />
    </div>
  );
}
